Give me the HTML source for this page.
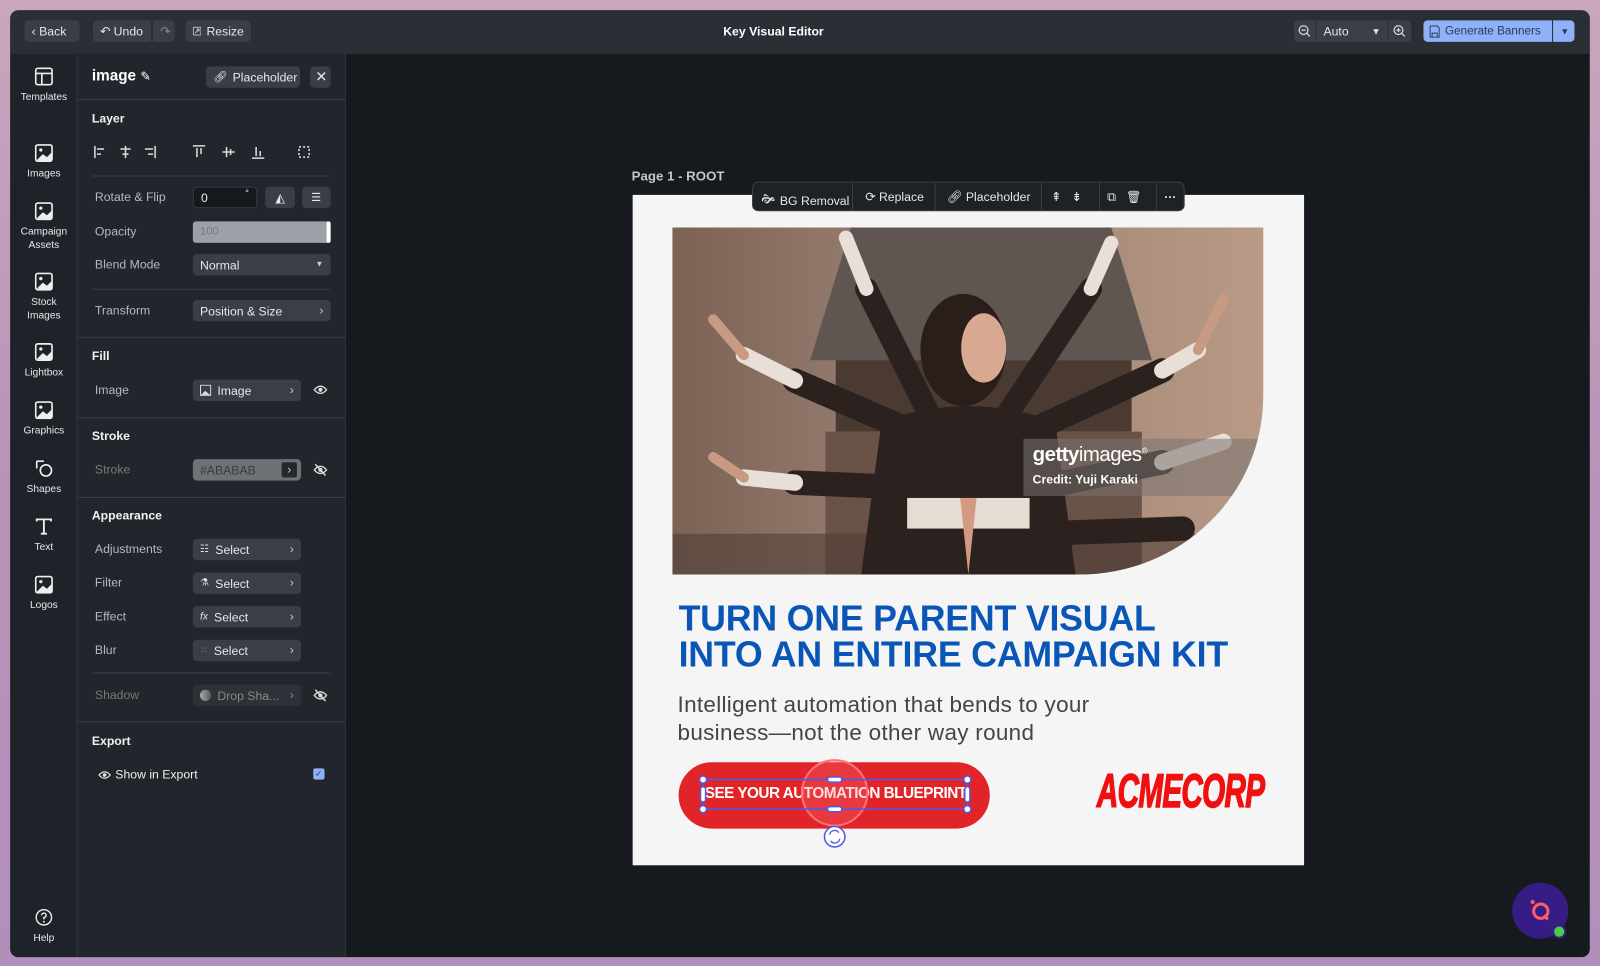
<!DOCTYPE html>
<html><head><meta charset="utf-8"><style>
*{box-sizing:border-box;margin:0;padding:0}
html,body{width:1600px;height:966px;overflow:hidden}
body{background:linear-gradient(180deg,#c9a6bd 0%,#b893b9 50%,#b28fba 100%);font-family:"Liberation Sans",sans-serif;color:#e8e9eb}
#s{position:absolute;left:0;top:0;width:1568px;height:947px;transform:scale(1.0204);transform-origin:0 0}
.a{position:absolute}
.win{left:10px;top:10px;width:1548px;height:928px;background:#16191d;border-radius:8px;overflow:hidden}
.top{left:0;top:0;width:1548px;height:43px;background:#2a2f36}
.btn{position:absolute;background:#3a3f47;border-radius:4px;height:21px;font-size:12px;color:#e6e7e9;display:flex;align-items:center;gap:5px;padding:0 7px;white-space:nowrap}
.rail{left:0;top:43px;width:66px;height:885px;background:#1f2329;border-right:1px solid #30353c}
.panel{left:66px;top:43px;width:263px;height:885px;background:#22262c;border-right:1px solid #30353c}
.ri{position:absolute;left:0;width:66px;text-align:center;font-size:10px;color:#e6e7e9;line-height:13px}
.ri svg{display:block;margin:0 auto 5px}
.lbl{position:absolute;font-size:12px;color:#b5b8bd}
.h{position:absolute;font-size:12px;font-weight:bold;color:#f0f1f2}
.div{position:absolute;height:1px;background:#3a3f46}
.sel{position:absolute;background:#3a3f47;border-radius:4px;height:21px;font-size:12px;color:#e6e7e9;display:flex;align-items:center;padding:0 7px;gap:6px;white-space:nowrap}
.sel .ch{position:absolute;right:7px;top:3px;font-size:12px;color:#ccc}
.tb{position:absolute;font-size:12px;color:#e6e7e9;display:flex;align-items:center;gap:5px;top:7px;white-space:nowrap}
.eye{position:absolute;left:231px}
</style></head><body><div id="s">
<div class="a win">
 <div class="a top">
  <div class="btn" style="left:14px;top:10px;width:54px">‹&nbsp;Back</div>
  <div class="btn" style="left:81px;top:10px;width:57px;border-radius:4px 0 0 4px">↶ Undo</div>
  <div class="btn" style="left:140px;top:10px;width:21px;border-radius:0 4px 4px 0;color:#888">↷</div>
  <div class="btn" style="left:172px;top:10px;width:64px"><svg width="11" height="11" viewBox="0 0 11 11"><rect x=".5" y=".5" width="10" height="10" rx="1" fill="none" stroke="#ddd"/><path d="M3 8L8 3M5 3h3v3" stroke="#ddd" fill="none"/></svg>Resize</div>
  <div class="a" style="left:0;width:1496px;top:14px;text-align:center;font-size:12px;font-weight:bold;color:#fff">Key Visual Editor</div>
  <div class="btn" style="left:1258px;top:10px;width:21px;border-radius:4px 0 0 4px;padding:0 4px"><svg width="13" height="13" viewBox="0 0 13 13"><circle cx="5.5" cy="5.5" r="4.3" fill="none" stroke="#ddd" stroke-width="1.2"/><path d="M3.5 5.5h4M8.7 8.7l3 3" stroke="#ddd" stroke-width="1.2"/></svg></div>
  <div class="btn" style="left:1280px;top:10px;width:70px;border-radius:0">Auto<span style="margin-left:auto;font-size:9px">▼</span></div>
  <div class="btn" style="left:1351px;top:10px;width:22px;border-radius:0 4px 4px 0;padding:0 4px"><svg width="13" height="13" viewBox="0 0 13 13"><circle cx="5.5" cy="5.5" r="4.3" fill="none" stroke="#ddd" stroke-width="1.2"/><path d="M3.5 5.5h4M5.5 3.5v4M8.7 8.7l3 3" stroke="#ddd" stroke-width="1.2"/></svg></div>
  <div class="btn" style="left:1385px;top:10px;width:126px;background:#8fb1f8;color:#2b3a5c;border-radius:4px 0 0 4px;font-size:11.5px;padding:0 6px"><svg width="10" height="12" viewBox="0 0 10 12"><path d="M.5.5h7l2 2v9h-9z M2.5 11.5v-4h5v4" fill="none" stroke="#2b3a5c"/></svg>Generate Banners</div>
  <div class="btn" style="left:1512px;top:10px;width:21px;background:#8fb1f8;color:#2b3a5c;border-radius:0 4px 4px 0;font-size:9px">▼</div>
 </div>
 <div class="a rail">
  <div class="ri" style="top:13px"><svg width="18" height="18" viewBox="0 0 18 18"><rect x="1" y="1" width="16" height="16" rx="2" fill="none" stroke="#eee" stroke-width="1.6"/><path d="M1 6h16M7 6v11" stroke="#eee" stroke-width="1.6"/></svg>Templates</div>
  <div class="ri" style="top:88px"><svg width="18" height="18" viewBox="0 0 18 18"><rect x="1" y="1" width="16" height="16" rx="2" fill="none" stroke="#eee" stroke-width="1.6"/><circle cx="6" cy="6" r="1.6" fill="#eee"/><path d="M2 16l6-6 4 3 5-5v9z" fill="#eee"/></svg>Images</div>
  <div class="ri" style="top:145px"><svg width="18" height="18" viewBox="0 0 18 18"><rect x="1" y="1" width="16" height="16" rx="2" fill="none" stroke="#eee" stroke-width="1.6"/><circle cx="6" cy="6" r="1.6" fill="#eee"/><path d="M2 16l6-6 4 3 5-5v9z" fill="#eee"/></svg>Campaign<br>Assets</div>
  <div class="ri" style="top:214px"><svg width="18" height="18" viewBox="0 0 18 18"><rect x="1" y="1" width="16" height="16" rx="2" fill="none" stroke="#eee" stroke-width="1.6"/><circle cx="6" cy="6" r="1.6" fill="#eee"/><path d="M2 16l6-6 4 3 5-5v9z" fill="#eee"/></svg>Stock<br>Images</div>
  <div class="ri" style="top:283px"><svg width="18" height="18" viewBox="0 0 18 18"><rect x="1" y="1" width="16" height="16" rx="2" fill="none" stroke="#eee" stroke-width="1.6"/><circle cx="6" cy="6" r="1.6" fill="#eee"/><path d="M2 16l6-6 4 3 5-5v9z" fill="#eee"/></svg>Lightbox</div>
  <div class="ri" style="top:340px"><svg width="18" height="18" viewBox="0 0 18 18"><rect x="1" y="1" width="16" height="16" rx="2" fill="none" stroke="#eee" stroke-width="1.6"/><circle cx="6" cy="6" r="1.6" fill="#eee"/><path d="M2 16l6-6 4 3 5-5v9z" fill="#eee"/></svg>Graphics</div>
  <div class="ri" style="top:397px"><svg width="18" height="18" viewBox="0 0 18 18"><path d="M9 2H3a1 1 0 0 0-1 1v6" fill="none" stroke="#eee" stroke-width="1.6"/><circle cx="11" cy="11" r="5.5" fill="none" stroke="#eee" stroke-width="1.6"/></svg>Shapes</div>
  <div class="ri" style="top:454px"><svg width="18" height="18" viewBox="0 0 18 18"><path d="M2 4V2h14v2M9 2v14M6 16h6" fill="none" stroke="#eee" stroke-width="1.8"/></svg>Text</div>
  <div class="ri" style="top:511px"><svg width="18" height="18" viewBox="0 0 18 18"><rect x="1" y="1" width="16" height="16" rx="2" fill="none" stroke="#eee" stroke-width="1.6"/><circle cx="6" cy="6" r="1.6" fill="#eee"/><path d="M2 16l6-6 4 3 5-5v9z" fill="#eee"/></svg>Logos</div>
  <div class="ri" style="top:837px"><svg width="18" height="18" viewBox="0 0 18 18"><circle cx="9" cy="9" r="7.5" fill="none" stroke="#eee" stroke-width="1.4"/><path d="M6.8 7a2.2 2.2 0 1 1 2.2 2.2V11" fill="none" stroke="#eee" stroke-width="1.4"/><circle cx="9" cy="13.3" r=".9" fill="#eee"/></svg>Help</div>
 </div>
 <div class="a panel">
  <div class="a" style="left:14px;top:13px;font-size:15px;font-weight:bold;color:#fff">image <span style="font-size:12px;font-weight:normal">✎</span></div>
  <div class="btn" style="left:126px;top:12px;width:92px"><span style="font-size:11px">🔗︎</span>Placeholder</div>
  <div class="btn" style="left:228px;top:12px;width:20px;padding:0 5px;font-size:14px">✕</div>
  <div class="div" style="left:0;top:44px;width:263px"></div>
  <div class="h" style="left:14px;top:56px">Layer</div>
  <svg class="a" style="left:14px;top:88px" width="240" height="16" viewBox="0 0 240 16" stroke="#ddd" stroke-width="1.5" fill="none">
   <path d="M3 2v12M5 5h7M5 10h4"/><path d="M33 2v12M28 5h10M30 10h6"/><path d="M62 2v12M52 5h8M55 10h5"/>
   <path d="M99 2h12M103 4v9M107 4v6"/><path d="M128 8h12M132 3v10M136 5v6"/><path d="M157 14h12M161 3v9M165 7v5"/>
   <rect x="203" y="3" width="10" height="10" stroke-dasharray="2 2"/>
  </svg>
  <div class="div" style="left:14px;top:119px;width:233px"></div>
  <div class="lbl" style="left:17px;top:133px">Rotate &amp; Flip</div>
  <div class="a" style="left:113px;top:130px;width:63px;height:21px;background:#15181c;border:1px solid #343940;border-radius:4px;font-size:12px;padding:3px 7px;color:#eee">0<span style="position:absolute;right:7px;top:0;font-size:9px">°</span></div>
  <div class="btn" style="left:184px;top:130px;width:29px;justify-content:center;padding:0">◭</div>
  <div class="btn" style="left:220px;top:130px;width:28px;justify-content:center;padding:0;font-size:11px">☰</div>
  <div class="lbl" style="left:17px;top:167px">Opacity</div>
  <div class="a" style="left:113px;top:164px;width:135px;height:21px;background:#9ba1a7;border-radius:3px;font-size:11px;color:#777;padding:4px 7px">100<span style="position:absolute;right:0;top:0;width:4px;height:21px;background:#fff;border-radius:2px"></span></div>
  <div class="lbl" style="left:17px;top:199px">Blend Mode</div>
  <div class="sel" style="left:113px;top:196px;width:135px">Normal<span class="ch" style="font-size:8px;top:5px">▼</span></div>
  <div class="div" style="left:14px;top:230px;width:233px"></div>
  <div class="lbl" style="left:17px;top:244px">Transform</div>
  <div class="sel" style="left:113px;top:241px;width:135px">Position &amp; Size<span class="ch">›</span></div>
  <div class="div" style="left:0;top:277px;width:263px"></div>
  <div class="h" style="left:14px;top:289px">Fill</div>
  <div class="lbl" style="left:17px;top:322px">Image</div>
  <div class="sel" style="left:113px;top:319px;width:106px"><svg width="11" height="11"><rect x=".5" y=".5" width="10" height="10" fill="none" stroke="#ddd"/><path d="M1 10l4-4 5 4z" fill="#ddd"/></svg>Image<span class="ch">›</span></div>
  <svg class="eye" style="top:323px" width="14" height="12" viewBox="0 0 14 12"><path d="M1 6Q7-1 13 6Q7 13 1 6Z" fill="none" stroke="#ddd" stroke-width="1.3"/><circle cx="7" cy="6" r="2" fill="#ddd"/></svg>
  <div class="div" style="left:0;top:356px;width:263px"></div>
  <div class="h" style="left:14px;top:367px">Stroke</div>
  <div class="lbl" style="left:17px;top:400px;color:#777">Stroke</div>
  <div class="sel" style="left:113px;top:397px;width:106px;background:#6e7175;color:#3a3c40">#ABABAB<span style="position:absolute;right:4px;top:3px;width:15px;height:15px;background:#25282c;color:#ccc;border-radius:2px;text-align:center;line-height:15px">›</span></div>
  <svg class="eye" style="top:401px" width="14" height="13" viewBox="0 0 14 13"><path d="M1 6.5Q7-.5 13 6.5Q7 13.5 1 6.5Z" fill="none" stroke="#ddd" stroke-width="1.3"/><circle cx="7" cy="6.5" r="2" fill="#ddd"/><path d="M2 1l10 11" stroke="#ddd" stroke-width="1.4"/></svg>
  <div class="div" style="left:0;top:434px;width:263px"></div>
  <div class="h" style="left:14px;top:445px">Appearance</div>
  <div class="lbl" style="left:17px;top:478px">Adjustments</div>
  <div class="sel" style="left:113px;top:475px;width:106px"><span style="font-size:10px">☷</span>Select<span class="ch">›</span></div>
  <div class="lbl" style="left:17px;top:511px">Filter</div>
  <div class="sel" style="left:113px;top:508px;width:106px"><span style="font-size:10px">⚗</span>Select<span class="ch">›</span></div>
  <div class="lbl" style="left:17px;top:544px">Effect</div>
  <div class="sel" style="left:113px;top:541px;width:106px"><i style="font-size:10px">fx</i>Select<span class="ch">›</span></div>
  <div class="lbl" style="left:17px;top:577px">Blur</div>
  <div class="sel" style="left:113px;top:574px;width:106px"><span style="font-size:9px;color:#888">⁙</span>Select<span class="ch">›</span></div>
  <div class="div" style="left:14px;top:606px;width:233px"></div>
  <div class="lbl" style="left:17px;top:621px;color:#777">Shadow</div>
  <div class="sel" style="left:113px;top:618px;width:106px;background:#2e3238;color:#888"><span style="display:inline-block;width:11px;height:11px;border-radius:50%;background:linear-gradient(90deg,#aaa,#555)"></span>Drop Sha...<span class="ch" style="color:#888">›</span></div>
  <svg class="eye" style="top:622px" width="14" height="13" viewBox="0 0 14 13"><path d="M1 6.5Q7-.5 13 6.5Q7 13.5 1 6.5Z" fill="none" stroke="#ddd" stroke-width="1.3"/><circle cx="7" cy="6.5" r="2" fill="#ddd"/><path d="M2 1l10 11" stroke="#ddd" stroke-width="1.4"/></svg>
  <div class="div" style="left:0;top:654px;width:263px"></div>
  <div class="h" style="left:14px;top:666px">Export</div>
  <svg class="a" style="left:20px;top:701px" width="13" height="11" viewBox="0 0 14 12"><path d="M1 6Q7-1 13 6Q7 13 1 6Z" fill="none" stroke="#ddd" stroke-width="1.3"/><circle cx="7" cy="6" r="2" fill="#ddd"/></svg>
  <div class="a" style="left:37px;top:699px;font-size:12px;color:#eee">Show in Export</div>
  <div class="a" style="left:231px;top:700px;width:11px;height:11px;background:#8fb1f8;border-radius:2px;color:#2b3a5c;font-size:9px;text-align:center;line-height:11px">✓</div>
 </div>
</div>

<div class="a" style="left:619px;top:165px;font-size:13px;font-weight:bold;color:#c4c6c9">Page 1 - ROOT</div>
<div class="a" style="left:620px;top:191px;width:658px;height:657px;background:#f5f5f5">
 <div class="a" style="left:39px;top:32px;width:579px;height:340px;overflow:hidden;border-bottom-right-radius:180px 175px;background:linear-gradient(90deg,#7b6254 0%,#8f7668 25%,#a48675 60%,#b89a87 100%)">
  <svg width="579" height="340" viewBox="0 0 579 340">
   <polygon points="175,0 430,0 470,130 135,130" fill="#5f5651"/>
   <rect x="160" y="130" width="290" height="70" fill="#4a3a32"/>
   <rect x="150" y="200" width="310" height="140" fill="#6a5247"/>
   <rect x="0" y="300" width="579" height="40" fill="#4e3e35" opacity=".6"/>
   <g stroke-linecap="round" fill="none">
    <path d="M250 180L190 60" stroke="#2b221f" stroke-width="22"/><path d="M190 60L170 10" stroke="#e8dfd8" stroke-width="14"/>
    <path d="M330 180L410 60" stroke="#2b221f" stroke-width="22"/><path d="M410 60L430 15" stroke="#e8dfd8" stroke-width="14"/>
    <path d="M235 200L120 150" stroke="#2b221f" stroke-width="24"/><path d="M120 150L70 125" stroke="#e8dfd8" stroke-width="16"/><path d="M70 125L40 90" stroke="#c89a83" stroke-width="10"/>
    <path d="M350 200L480 140" stroke="#2b221f" stroke-width="24"/><path d="M480 140L515 120" stroke="#e8dfd8" stroke-width="16"/><path d="M515 120L540 70" stroke="#c89a83" stroke-width="10"/>
    <path d="M240 255L120 250" stroke="#2b221f" stroke-width="24"/><path d="M120 250L70 245" stroke="#e8dfd8" stroke-width="16"/><path d="M70 245L40 225" stroke="#c89a83" stroke-width="10"/>
    <path d="M360 255L480 230" stroke="#2b221f" stroke-width="24"/><path d="M480 230L540 210" stroke="#e8dfd8" stroke-width="16"/>
    <path d="M360 300L500 295" stroke="#2b221f" stroke-width="24"/>
   </g>
   <path d="M205 190Q290 160 375 190L395 340H185Z" fill="#2b221f"/>
   <rect x="230" y="265" width="120" height="30" fill="#e5dcd4"/>
   <path d="M282 265L290 340L298 265Z" fill="#d29a80"/>
   <ellipse cx="285" cy="120" rx="42" ry="55" fill="#2a1e1a"/>
   <ellipse cx="305" cy="118" rx="22" ry="34" fill="#d9a890"/>
  </svg>
  <div class="a" style="left:344px;top:207px;width:240px;height:56px;background:rgba(120,115,112,.55)"></div>
  <div class="a" style="left:353px;top:212px;font-size:20px;color:#fff;letter-spacing:-.5px"><b>getty</b>images<sup style="font-size:8px">®</sup></div>
  <div class="a" style="left:353px;top:240px;font-size:12px;font-weight:bold;color:#fff">Credit: Yuji Karaki</div>
 </div>
 <div class="a" style="left:45px;top:398px;font-size:35px;font-weight:bold;color:#0a56b7;line-height:35px;letter-spacing:-.2px;white-space:nowrap">TURN ONE PARENT VISUAL<br>INTO AN ENTIRE CAMPAIGN KIT</div>
 <div class="a" style="left:44px;top:486px;font-size:22px;color:#444;line-height:27px;letter-spacing:.3px">Intelligent automation that bends to your<br>business—not the other way round</div>
 <div class="a" style="left:45px;top:556px;width:305px;height:65px;background:#e12428;border-radius:33px"></div>
 <div class="a" style="left:68px;top:578px;width:262px;text-align:center;font-size:15px;font-weight:bold;color:#fff;letter-spacing:-.5px;white-space:nowrap">SEE YOUR AUTOMATION BLUEPRINT</div>
 <svg class="a" style="left:40px;top:545px" width="320" height="100" viewBox="0 0 320 100">
  <circle cx="158" cy="41" r="32" fill="rgba(255,120,130,.25)" stroke="#ff7078" stroke-width="2"/>
  <rect x="29" y="28" width="259" height="29" fill="none" stroke="#4f5ae6" stroke-width="1.5"/>
  <g fill="#fff" stroke="#4f5ae6" stroke-width="1.5"><circle cx="29" cy="28" r="3.5"/><circle cx="288" cy="28" r="3.5"/><circle cx="29" cy="57" r="3.5"/><circle cx="288" cy="57" r="3.5"/>
  <rect x="151" y="25.5" width="14" height="5" rx="2.5"/><rect x="151" y="54.5" width="14" height="5" rx="2.5"/>
  <rect x="26.5" y="35" width="5" height="15" rx="2.5"/><rect x="285.5" y="35" width="5" height="15" rx="2.5"/>
  <circle cx="158" cy="84" r="10"/></g>
  <path d="M153 82a5 5 0 0 1 9-2M163 86a5 5 0 0 1-9 2" stroke="#4f5ae6" stroke-width="1.3" fill="none"/>
 </svg>
 <div class="a" style="left:455px;top:562px;width:164px;height:45px;overflow:visible"><div style="font-size:46px;font-weight:900;font-style:italic;color:#f01010;transform:scaleX(.63);transform-origin:0 0;white-space:nowrap;letter-spacing:-1px;line-height:45px;-webkit-text-stroke:1.5px #f01010">ACMECORP</div></div>
</div>
<div class="a" style="left:737px;top:178px;width:424px;height:29px;background:#1e2227;border:1px solid #3a3f46;border-radius:6px">
 <div class="tb" style="left:8px">🙞︎<span>BG Removal</span></div>
 <div class="a" style="left:97px;top:0;width:1px;height:27px;background:#3a3f46"></div>
 <div class="tb" style="left:110px">⟳ Replace</div>
 <div class="a" style="left:178px;top:0;width:1px;height:27px;background:#3a3f46"></div>
 <div class="tb" style="left:190px">🔗︎ Placeholder</div>
 <div class="a" style="left:282px;top:0;width:1px;height:27px;background:#3a3f46"></div>
 <div class="tb" style="left:292px">⇞&nbsp;&nbsp;&nbsp;⇟</div>
 <div class="a" style="left:339px;top:0;width:1px;height:27px;background:#3a3f46"></div>
 <div class="tb" style="left:347px">⧉&nbsp;&nbsp;&nbsp;🗑︎</div>
 <div class="a" style="left:395px;top:0;width:1px;height:27px;background:#3a3f46"></div>
 <div class="tb" style="left:403px;font-weight:bold">···</div>
</div>
<div class="a" style="left:1482px;top:865px;width:55px;height:55px;border-radius:50%;background:#361d85"></div>
<svg class="a" style="left:1495px;top:878px" width="30" height="30" viewBox="0 0 30 30"><circle cx="15" cy="15" r="7" fill="none" stroke="#ff5a6a" stroke-width="3"/><path d="M18 19l4 4" stroke="#ff5a6a" stroke-width="3"/><circle cx="7" cy="6" r="2" fill="#ff5a6a"/></svg>
<div class="a" style="left:1521px;top:906px;width:14px;height:14px;border-radius:50%;background:#4ccc4c;border:2px solid #361d85"></div>
</div></body></html>
